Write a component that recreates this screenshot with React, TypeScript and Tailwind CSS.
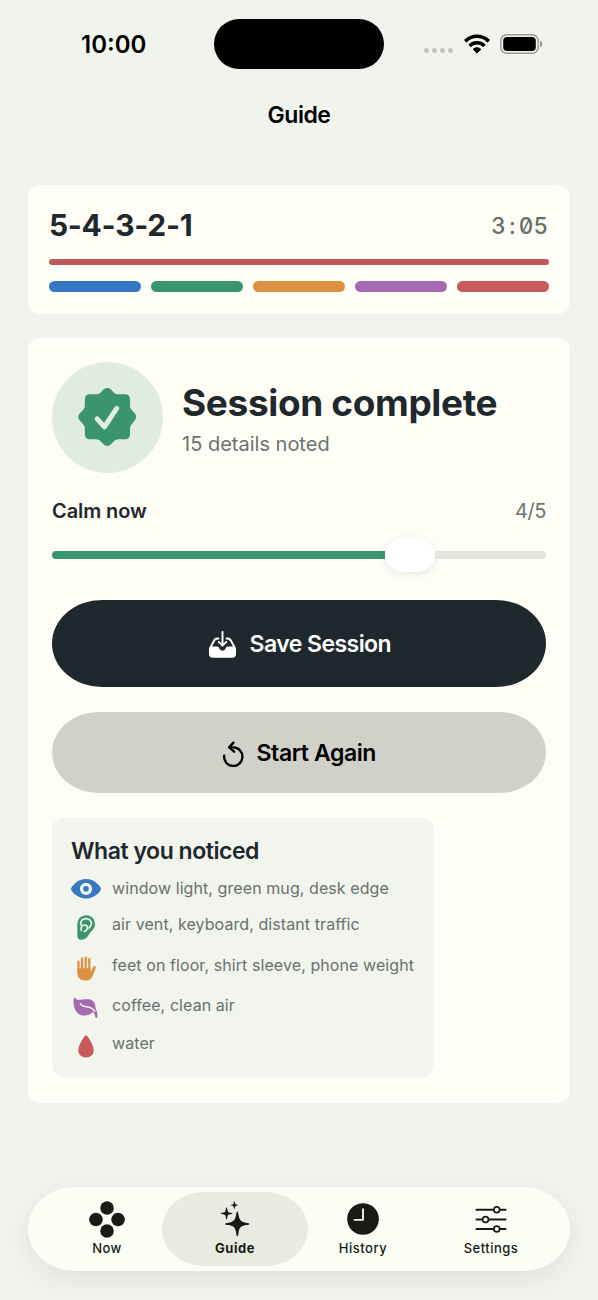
import React from 'react';

interface IconProps {
  className?: string;
}

const WifiIcon: React.FC<IconProps> = ({ className }) => (
  <svg className={className} viewBox="0 0 26 20" fill="currentColor">
    <path d="M13 .5C18 .5 22.500 2.500 25.600 5.600 25.900 5.900 25.900 6.300 25.600 6.600L24 8.200C23.700 8.500 23.300 8.500 23 8.200 20.300 5.600 16.800 4.100 13 4.100S5.700 5.600 3 8.200C2.700 8.500 2.300 8.500 2 8.200L.4 6.600C.1 6.300.1 5.900.4 5.600 3.500 2.500 8 .5 13 .5Z" />
    <path d="M13 7C16.200 7 19.100 8.200 21.200 10.200 21.500 10.500 21.500 10.900 21.200 11.200L19.600 12.700C19.300 13 18.900 13 18.600 12.700 17.100 11.300 15.100 10.500 13 10.500S8.900 11.300 7.400 12.700C7.100 13 6.700 13 6.400 12.700L4.800 11.200C4.500 10.900 4.500 10.500 4.800 10.200 6.900 8.200 9.800 7 13 7Z" />
    <path d="M13 13.300C14.500 13.300 15.800 13.900 16.800 14.800 17.100 15.100 17.100 15.500 16.800 15.800L13.600 19C13.300 19.300 12.700 19.300 12.400 19L9.200 15.800C8.900 15.500 8.900 15.100 9.200 14.800 10.200 13.900 11.500 13.300 13 13.300Z" />
  </svg>
);

const BatteryIcon: React.FC<IconProps> = ({ className }) => (
  <svg className={className} viewBox="0 0 43 20">
    <rect x="0.800" y="0.700" width="37.400" height="18.600" rx="6" fill="none" stroke="#989b95" strokeWidth="1.400" />
    <rect x="3.200" y="3" width="32.600" height="14" rx="4" fill="#000" />
    <path d="M40 6.800C41.600 7.200 42.400 8.500 42.400 10S41.600 12.800 40 13.200Z" fill="#989b95" />
  </svg>
);

const SealIcon: React.FC<IconProps> = ({ className }) => (
  <svg className={className} viewBox="114 116 175 176">
    <path
      d="M191 120Q201.500 112 212 120L222 130Q227 135 234 135H254Q270 135 270 151V170Q270 177 275 182L284 192Q293 203 284 214L275 225Q270 230 270 237V255Q270 270 254 270H235Q228 270 223 275L212 286Q201.500 295 191 286L180 275Q175 270 168 270H150Q134 270 134 255V237Q134 230 129 225L119 214Q110 203 119 192L129 182Q134 177 134 170V151Q134 135 150 135H169Q176 135 181 130Z"
      fill="#3a956c"
    />
    <path d="M171 209L193 233L230 177" fill="none" stroke="#e2efe3" strokeWidth="15" strokeLinecap="round" strokeLinejoin="round" />
  </svg>
);

const TrayIcon: React.FC<IconProps> = ({ className }) => (
  <svg className={className} viewBox="506 121 82 82" fill="none">
    <path d="M507 171L519 148Q523 141 531 141H537V147H532Q527 147 524 152L515 168H531Q536 168 537 173Q539 181 547 181T557 173Q558 168 563 168H579L570 152Q567 147 562 147H557V141H563Q571 141 575 148L587 171Q588 173 588 176V191Q588 202 577 202H517Q506 202 506 191V176Q506 173 507 171Z" fill="currentColor" />
    <path d="M547 125V164M535 153L547 166L559 153" stroke="#1f292d" strokeWidth="13" />
    <path d="M547 124V164M535.500 154L547 165.500L558.500 154" stroke="currentColor" strokeWidth="6" strokeLinecap="round" strokeLinejoin="round" />
  </svg>
);

const RestartIcon: React.FC<IconProps> = ({ className }) => (
  <svg className={className} viewBox="546 448 68 78" fill="none" stroke="currentColor" strokeWidth="7" strokeLinecap="round" strokeLinejoin="round">
    <path d="M552 492A27.500 28 0 1 0 579.500 467H567" />
    <path d="M580 453L567 467L582 480" />
  </svg>
);

const EyeIcon: React.FC<IconProps> = ({ className }) => (
  <svg className={className} viewBox="77 208 91 60">
    <path d="M77 238C77 232 96 208 122.500 208S168 232 168 238 149 267 122.500 267 77 244 77 238Z" fill="#3577c2" />
    <circle cx="122.500" cy="237.500" r="13.500" fill="none" stroke="#f1f5ee" strokeWidth="10" />
  </svg>
);

const EarIcon: React.FC<IconProps> = ({ className }) => (
  <svg className={className} viewBox="95 315 54 75" fill="none">
    <path d="M96 345C96 327 107 316 123 316S149 328 149 343C149 353 143 359 138 364C132 370 130 376 125 382C120 388 113 390 106 389C99 388 96 384 96 377Z" fill="#3a956c" />
    <path d="M106 344C106 332 113 326 122 326C132 326 139 333 138 342C137 348 134 350 131 354" stroke="#f1f5ee" strokeWidth="5" strokeLinecap="round" />
    <path d="M108 361C105 351 111 344 119 345C129 347 129 359 117 365" stroke="#f1f5ee" strokeWidth="5" strokeLinecap="round" />
  </svg>
);

const HandIcon: React.FC<IconProps> = ({ className }) => (
  <svg className={className} viewBox="96 437 58 75" fill="none">
    <g stroke="#db9141" strokeWidth="7" strokeLinecap="round">
      <path d="M100.500 454V486M111.500 444V482M122.500 441V482M133.500 446V482" />
    </g>
    <path d="M97 474H137V484C140 484 142 474 146 469C149 465 155 468 153 473L145 494C141 506 133 511 122 511C106 511 97 502 97 486Z" fill="#db9141" />
  </svg>
);

const LeafIcon: React.FC<IconProps> = ({ className }) => (
  <svg className={className} viewBox="85 560 75 64" fill="none">
    <path d="M87 563C89 560 92 567 99 568C109 570 119 565 133 567C146 569 153 578 153 594C157 601 160 612 159 620C158 624 153 624 152 620C151 613 149 609 145 606C137 615 125 618 113 616C94 612 86 594 86 575C86 570 86 565 87 563Z" fill="#a66ab3" />
    <path d="M107 581C114 592 124 588 134 591C142 593 147 598 151 604" stroke="#f1f5ee" strokeWidth="4.500" strokeLinecap="round" />
  </svg>
);

const DropIcon: React.FC<IconProps> = ({ className }) => (
  <svg className={className} viewBox="97 673 49 69">
    <path d="M118 675Q121.500 671 125 675C132 684 145 704 145 719C145 733 135 741 121.500 741S98 733 98 719C98 704 111 684 118 675Z" fill="#c75a5b" />
  </svg>
);

const DotsIcon: React.FC<IconProps> = ({ className }) => (
  <svg className={className} viewBox="205 92 109 112" fill="currentColor">
    <circle cx="259.500" cy="113" r="20.500" />
    <circle cx="226" cy="148" r="20.500" />
    <circle cx="293" cy="148" r="20.500" />
    <circle cx="259.500" cy="183" r="20.500" />
  </svg>
);

const SparklesIcon: React.FC<IconProps> = ({ className }) => (
  <svg className={className} viewBox="601 91 89 109" fill="currentColor">
    <path d="M652.500 123C655 123 655 127 656 133C659 149 663 154 678 157C685 158 689 158 689 160.500S685 163 678 164C663 167 659 172 656 188C655 194 655 198 652.500 198S650 194 649 188C646 172 642 167 627 164C620 163 615 163 615 160.500S620 158 627 157C642 154 646 149 649 133C650 127 650 123 652.500 123Z" />
    <path d="M620 110C622 110 622 121 625 124S638 126 638 128.500 628 130 625 133 622 147 620 147 618 136 615 133 602 131 602 128.500 612 127 615 124 618 110 620 110Z" />
    <path d="M643.500 92C645 92 645 99 647 101S655 102 655 103.500 649 104 647 106 645 115 643.500 115 642 108 640 106 632 105 632 103.500 638 103 640 101 642 92 643.500 92Z" />
  </svg>
);

const ClockIcon: React.FC<IconProps> = ({ className }) => (
  <svg className={className} viewBox="140 100 97 97">
    <circle cx="188.500" cy="148.500" r="48" fill="currentColor" />
    <path d="M188.500 119V151H163" fill="none" stroke="#fafef5" strokeWidth="5.500" strokeLinecap="round" strokeLinejoin="round" />
  </svg>
);

const SlidersIcon: React.FC<IconProps> = ({ className }) => (
  <svg className={className} viewBox="524 107 95 82" fill="none" stroke="currentColor" strokeWidth="6.500" strokeLinecap="round">
    <path d="M527.500 118.500H579M599 118.500H615.500M527.500 148H545M565 148H615.500M527.500 177H579M599 177H615.500" />
    <circle cx="589" cy="118.500" r="8.800" strokeWidth="5" />
    <circle cx="555" cy="148" r="8.800" strokeWidth="5" />
    <circle cx="589" cy="177" r="8.800" strokeWidth="5" />
  </svg>
);

const notes = [
  { text: 'window light, green mug, desk edge', row: 'h-[36px]', icon: <EyeIcon className="mt-[2px] h-5 w-[30px]" /> },
  { text: 'air vent, keyboard, distant traffic', row: 'h-[36px]', icon: <EarIcon className="mt-[7px] h-[25px] w-[18px]" /> },
  { text: 'feet on floor, shirt sleeve, phone weight', row: 'h-[46px]', icon: <HandIcon className="mt-[7px] h-[25px] w-[19px]" /> },
  { text: 'coffee, clean air', row: 'h-[34px]', icon: <LeafIcon className="mt-[5px] mr-px h-[21px] w-[25px]" /> },
  { text: 'water', row: 'h-[42px]', icon: <DropIcon className="mt-[6px] mr-px h-[23px] w-[16px]" /> },
];

const steps = ['bg-[#3577c2]', 'bg-[#3a956c]', 'bg-[#db9141]', 'bg-[#a66ab3]', 'bg-[#c75a5b]'];

const tabs = [
  { label: 'Now', icon: <DotsIcon className="h-[37px] w-[36px]" /> },
  { label: 'Guide', icon: <SparklesIcon className="h-[36px] w-[30px]" />, active: true },
  { label: 'History', icon: <ClockIcon className="h-[32px] w-[32px]" /> },
  { label: 'Settings', icon: <SlidersIcon className="h-[27px] w-[32px]" /> },
];

const StatusBar = () => (
  <div className="flex h-[88px] items-center text-black">
    <div className="w-[214px] pt-[2px] pl-[81px] text-[24px] leading-8 font-semibold">10:00</div>
    <div className="h-[50px] w-[170px] rounded-full bg-black" />
    <div className="ml-[40px] flex gap-[3px] pt-3">
      {[0, 1, 2, 3].map((i) => (
        <span key={i} className="h-[5px] w-[5px] rounded-full bg-[#c2c5bf]" />
      ))}
    </div>
    <WifiIcon className="ml-[11px] h-5 w-[26px]" />
    <BatteryIcon className="ml-[10px] h-5 w-[43px]" />
  </div>
);

const ProgressCard = () => (
  <section className="mt-[43px] h-[129px] rounded-xl bg-[#fefef6] px-[21px] pt-[20px]">
    <div className="flex h-10 items-center justify-between">
      <h2 className="text-[30px] leading-10 font-bold tracking-[-0.300px]">5-4-3-2-1</h2>
      <span className="pt-px pr-px text-[22.500px] font-medium text-[#667069] slashed-zero tabular-nums">
        3<span className="mx-[3.500px]">:</span>05
      </span>
    </div>
    <div className="mt-[14px] h-[5.500px] rounded-full bg-[#c05859]" />
    <div className="mt-4 grid grid-cols-5 gap-[10.600px]">
      {steps.map((color) => (
        <div key={color} className={`h-[11.500px] rounded-full ${color}`} />
      ))}
    </div>
  </section>
);

const SessionCard = () => (
  <section className="mt-6 h-[765px] rounded-xl bg-[#fefef6] px-6 pt-6">
    <div className="flex h-[111px]">
      <div className="flex h-[111px] w-[111px] items-center justify-center rounded-full bg-[#e0ece0]">
        <SealIcon className="h-[58.500px] w-[58.500px]" />
      </div>
      <div className="ml-[19px] pt-[19px]">
        <h1 className="text-[37px] leading-[44px] font-bold tracking-[-0.370px] whitespace-nowrap">Session complete</h1>
        <p className="mt-[5px] text-[20px] leading-7 text-[#6d736e]">15 details noted</p>
      </div>
    </div>

    <div className="mt-6 flex h-7 items-center justify-between">
      <span className="text-[20px] font-semibold tracking-[-0.100px]">Calm now</span>
      <span className="text-[20px] tracking-[-0.400px] text-[#6d736e]">4/5</span>
    </div>
    <div className="mt-[13px] flex h-[34px] items-center">
      <div className="h-2 w-[333px] rounded-l-full bg-[#3a956c]" />
      <div className="h-[34px] w-[50px] rounded-[20px/17px] bg-white shadow-[0_2px_10px_rgba(0,0,0,0.1)]" />
      <div className="h-2 flex-1 rounded-r-full bg-[#e4e4dd]" />
    </div>

    <button className="mt-[28px] flex h-[87px] w-full items-center justify-center rounded-[50px/43.500px] bg-[#1f292d] pt-[2px] text-[23px] font-semibold tracking-[-0.550px] text-white">
      <TrayIcon className="mr-[14px] h-[27px] w-[27px]" />
      <span className="w-[140px] text-left whitespace-nowrap">Save Session</span>
    </button>
    <button className="mt-[25px] flex h-[81px] w-full items-center justify-center rounded-[47px/40.500px] bg-[#d1d0c9] pt-[2px] text-[23px] font-semibold tracking-[-0.400px] text-black">
      <RestartIcon className="mr-[12px] h-[26px] w-[23px]" />
      <span className="w-[120px] text-left whitespace-nowrap">Start Again</span>
    </button>

    <div className="mt-[25px] h-[259px] w-[382px] rounded-xl bg-[#f1f5ee] px-[19px] pt-[17px]">
      <h3 className="mb-[3px] text-[23px] leading-8 font-semibold tracking-[-0.450px]">What you noticed</h3>
      {notes.map((note) => (
        <div key={note.text} className={`flex items-center ${note.row}`}>
          <div className="flex w-[30px] shrink-0 justify-center">{note.icon}</div>
          <span className="ml-[11px] text-[16px] tracking-[0.080px] whitespace-nowrap text-[#6a716c]">{note.text}</span>
        </div>
      ))}
    </div>
  </section>
);

const TabBar = () => (
  <nav className="mt-[84px] flex h-[84px] items-center justify-center rounded-[46px/42px] bg-[#fafef5] text-[#171b14] shadow-[0_8px_30px_rgba(0,0,0,0.080)]">
    {tabs.map((tab) => (
      <div
        key={tab.label}
        className={
          tab.active
            ? '-mx-[9px] flex h-[73.500px] w-[146px] flex-col items-center rounded-[42px/36.700px] bg-[#e8ebe2] pt-[8px] font-bold'
            : 'flex h-[73.500px] w-[128px] flex-col items-center pt-[8px] font-medium'
        }
      >
        <div className="flex h-[38px] items-center">{tab.icon}</div>
        <span className="text-[13px] leading-5 tracking-[0.500px]">{tab.label}</span>
      </div>
    ))}
  </nav>
);

export default function App() {
  return (
    <div className="h-[1300px] w-[598px] overflow-hidden bg-[#f1f4ed] font-['Inter',sans-serif] text-[#1f282c]">
      <StatusBar />
      <header className="flex h-[54px] items-center justify-center text-[23px] font-semibold tracking-[-0.500px] text-black">Guide</header>
      <main className="ml-[28px] w-[542px]">
        <ProgressCard />
        <SessionCard />
        <TabBar />
      </main>
    </div>
  );
}
